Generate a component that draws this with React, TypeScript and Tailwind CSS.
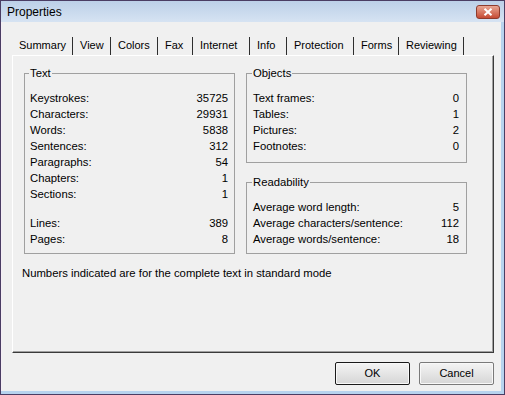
import React from 'react';

const tabs: { label: string; w: string }[] = [
    { label: 'Summary', w: 'w-[61px]' },
    { label: 'View', w: 'w-[38px]' },
    { label: 'Colors', w: 'w-[47px]' },
    { label: 'Fax', w: 'w-[35px]' },
    { label: 'Internet', w: 'w-[57px]' },
    { label: 'Info', w: 'w-[37px]' },
    { label: 'Protection', w: 'w-[67px]' },
    { label: 'Forms', w: 'w-[45px]' },
    { label: 'Reviewing', w: 'w-[65px]' },
];

const Row: React.FC<{ label: string; value: string }> = ({ label, value }) => (
    <div className="flex justify-between h-[16px] leading-[16px]">
        <span>{label}</span>
        <span>{value}</span>
    </div>
);

const Group: React.FC<{ title: string; className: string; children: React.ReactNode }> = ({ title, className, children }) => (
    <fieldset className={`border border-[#a0a0a0] pt-[10px] ${className}`}>
        <legend className="-ml-[1px] px-[1px] leading-[14px]">{title}</legend>
        {children}
    </fieldset>
);

const App: React.FC = () => {
    return (
        <div className="w-[505px] h-[395px] flex flex-col border border-[#4a3d63] bg-[#b7d3ee] font-['Liberation_Sans',Arial,sans-serif] text-[11.3px] text-black">
            {/* title bar */}
            <div className="h-[21px] flex items-center justify-between pl-[6px] pr-[4px] bg-gradient-to-b from-[#bcd0e8] to-[#d6e3f2]">
                <span className="text-[12px] text-black">Properties</span>
                <div className="w-[24px] h-[14px] rounded-[3px] border border-[#8e3b2d] bg-gradient-to-b from-[#e8a593] to-[#c54a33] flex items-center justify-center">
                    <svg width="10" height="8" viewBox="0 0 10 8">
                        <path d="M1.5 0.8 L8.5 7.2 M8.5 0.8 L1.5 7.2" stroke="#fff" strokeWidth="2" />
                    </svg>
                </div>
            </div>

            {/* client */}
            <div className="flex-1 flex mr-[3px] mb-[3px]">
                <div className="w-[1px] bg-[#f6eef6]" />
                <div className="flex-1 flex flex-col bg-[#f0f0f0] pt-[14px] pl-[10px] pr-[7px] pb-[6px]">
                    <div className="flex h-[19px] items-end text-[11px]">
                        {tabs.map((t) => (
                            <div key={t.label} className={`${t.w} h-[18px] leading-[16px] pl-[7px] border-r border-[#2e2e2e] whitespace-nowrap`}>
                                {t.label}
                            </div>
                        ))}
                    </div>

                    <div className="flex-1 flex flex-col border-t border-l border-white border-r border-b border-r-[#3a3a3a] border-b-[#3a3a3a] shadow-[inset_-1px_-1px_0_#a0a0a0] pt-[10px] pl-[9px]">
                        <div className="flex gap-[11px] ml-[2px]">
                            <Group title="Text" className="w-[211px] pl-[5px] pr-[6px] pb-[6px]">
                                <Row label="Keystrokes:" value="35725" />
                                <Row label="Characters:" value="29931" />
                                <Row label="Words:" value="5838" />
                                <Row label="Sentences:" value="312" />
                                <Row label="Paragraphs:" value="54" />
                                <Row label="Chapters:" value="1" />
                                <Row label="Sections:" value="1" />
                                <div className="h-[13px]" />
                                <Row label="Lines:" value="389" />
                                <Row label="Pages:" value="8" />
                            </Group>
                            <div className="flex flex-col gap-[12px]">
                                <Group title="Objects" className="w-[221px] pl-[6px] pr-[7px] pb-[8px]">
                                    <Row label="Text frames:" value="0" />
                                    <Row label="Tables:" value="1" />
                                    <Row label="Pictures:" value="2" />
                                    <Row label="Footnotes:" value="0" />
                                </Group>
                                <Group title="Readability" className="w-[221px] pl-[6px] pr-[7px] pb-[6px]">
                                    <Row label="Average word length:" value="5" />
                                    <Row label="Average characters/sentence:" value="112" />
                                    <Row label="Average words/sentence:" value="18" />
                                </Group>
                            </div>
                        </div>
                        <p className="mt-[12px] leading-[14px]">Numbers indicated are for the complete text in standard mode</p>
                    </div>

                    <div className="flex justify-end gap-[9px] mt-[9px] text-[11px]">
                        <button className="w-[75px] h-[23px] border border-[#1a1a1a] rounded-[2px] bg-gradient-to-b from-[#f4f4f4] to-[#d6d6d6] shadow-[inset_0_0_0_1px_#f8f8f8]">
                            OK
                        </button>
                        <button className="w-[75px] h-[23px] border border-[#7a7a7a] rounded-[2px] bg-gradient-to-b from-[#f4f4f4] to-[#d6d6d6] shadow-[inset_0_0_0_1px_#f8f8f8]">
                            Cancel
                        </button>
                    </div>
                </div>
            </div>
        </div>
    );
};

export default App;
